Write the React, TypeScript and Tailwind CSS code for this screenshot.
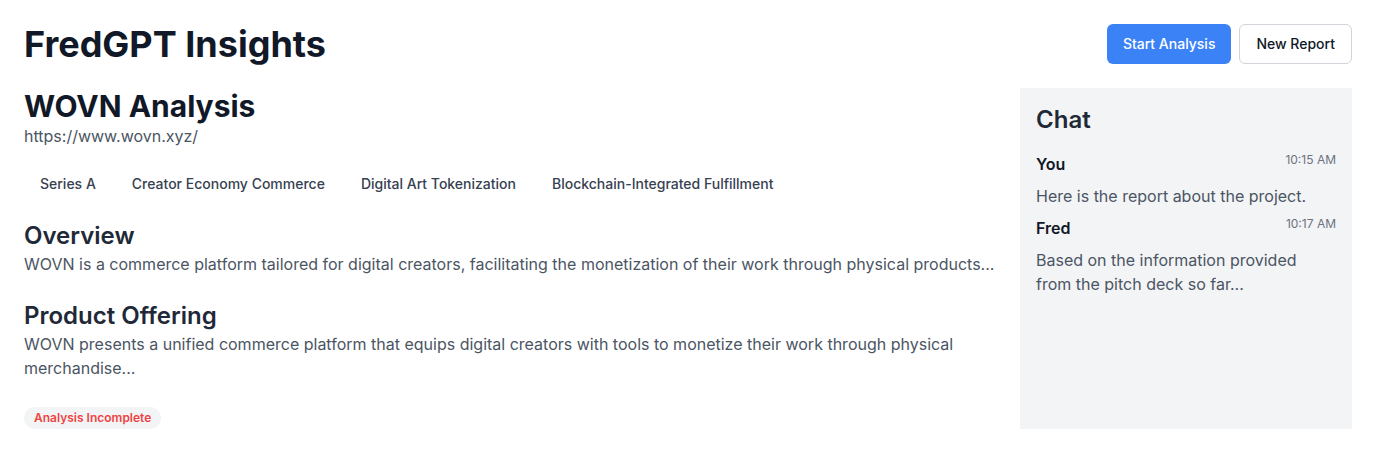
const tags = ["Series A", "Creator Economy Commerce", "Digital Art Tokenization", "Blockchain-Integrated Fulfillment"];

const messages = [
  { from: "You", time: "10:15 AM", text: "Here is the report about the project." },
  { from: "Fred", time: "10:17 AM", text: "Based on the information provided from the pitch deck so far..." },
];

export default function App() {
  return (
    <div className="min-h-screen bg-white p-6 font-['Inter',sans-serif] text-[#111827]">
      <header className="mb-6 flex items-center justify-between">
        <h1 className="text-4xl font-bold leading-10">FredGPT Insights</h1>
        <div className="flex gap-2">
          <button className="h-10 rounded-md bg-[#3b82f6] px-4 text-sm font-medium text-white">Start Analysis</button>
          <button className="h-10 rounded-md border border-[#d1d5db] bg-white px-4 text-sm font-medium text-[#111827]">
            New Report
          </button>
        </div>
      </header>

      <div className="grid grid-cols-4">
        <main className="col-span-3 pr-6">
          <h2 className="text-3xl font-bold leading-9">WOVN Analysis</h2>
          <p className="text-base text-[#4b5563]">https://www.wovn.xyz/</p>

          <div className="mt-4 flex h-10 items-center gap-1">
            {tags.map((tag) => (
              <span key={tag} className="px-4 text-sm font-medium text-[#374151]">
                {tag}
              </span>
            ))}
          </div>

          <section className="mt-4">
            <h3 className="text-2xl font-semibold leading-8 text-[#1f2937]">Overview</h3>
            <p className="text-base text-[#4b5563]">
              WOVN is a commerce platform tailored for digital creators, facilitating the monetization of their work through physical products...
            </p>
          </section>

          <section className="mt-6">
            <h3 className="text-2xl font-semibold leading-8 text-[#1f2937]">Product Offering</h3>
            <p className="text-base text-[#4b5563]">
              WOVN presents a unified commerce platform that equips digital creators with tools to monetize their work through physical merchandise...
            </p>
          </section>

          <span className="mt-[27px] inline-block rounded-full bg-[#f3f4f6] px-2.5 py-[3px] text-xs font-semibold text-[#ef4444]">
            Analysis Incomplete
          </span>
        </main>

        <aside className="bg-[#f3f4f6] p-4">
          <h2 className="mb-4 text-2xl font-semibold leading-8 text-[#1f2937]">Chat</h2>
          <div className="flex flex-col gap-2">
            {messages.map((m) => (
              <div key={m.from}>
                <div className="flex items-start justify-between">
                  <span className="text-base font-semibold">{m.from}</span>
                  <span className="text-xs text-[#6b7280]">{m.time}</span>
                </div>
                <p className="mt-2 text-base text-[#4b5563]">{m.text}</p>
              </div>
            ))}
          </div>
        </aside>
      </div>
    </div>
  );
}
